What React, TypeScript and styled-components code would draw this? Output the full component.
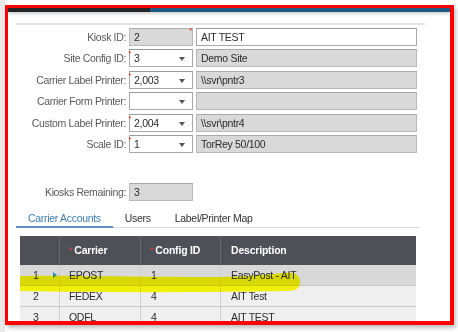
import React from "react";
import styled, { createGlobalStyle } from "styled-components";

const GlobalStyle = createGlobalStyle`
  html, body {
    margin: 0;
    padding: 0;
    width: 458px;
    height: 332px;
    overflow: hidden;
    background: #fff;
    font-family: "Liberation Sans", Arial, sans-serif;
  }
`;

const Page = styled.div`
  width: 458px;
  height: 332px;
  box-sizing: border-box;
  padding: 5px 0 0 5px;
  background: linear-gradient(to right, #e9e9e9 0 5px, #fff 5px);
`;

const Frame = styled.div`
  position: relative;
  width: 449px;
  height: 320px;
  box-sizing: border-box;
  border-style: solid;
  border-color: #ff0000;
  border-width: 3px 4px 4px 3px;
  box-shadow: 2px 3px 4px rgba(0, 0, 0, 0.25);
  overflow: hidden;
  background: #fff;
`;

const TopBar = styled.div`
  height: 4px;
  background: linear-gradient(to right, #232526 0 142px, #1d5b84 142px);
  box-shadow: 0 2px 3px rgba(0, 0, 0, 0.18);
`;

const Panel = styled.div`
  margin: 11px 0 0 8px;
  width: 409px;
  border-top: 2px solid #e4e4e4;
  padding-top: 3px;
`;

const FormGrid = styled.div<{ $top?: number }>`
  display: grid;
  grid-template-columns: 110px 64px 221px;
  grid-auto-rows: 18px;
  column-gap: 3px;
  row-gap: 3.4px;
  margin-top: ${(p) => p.$top ?? 0}px;
`;

const Label = styled.label`
  position: relative;
  justify-self: end;
  align-self: center;
  font-size: 10.5px;
  letter-spacing: -0.35px;
  color: #595959;
  white-space: nowrap;
`;

const Req = styled.span`
  position: absolute;
  z-index: 2;
  right: -5px;
  top: -3px;
  color: #e0281e;
  font-size: 8px;
`;

const Field = styled.div<{ $grey?: boolean }>`
  position: relative;
  box-sizing: border-box;
  height: 18px;
  display: flex;
  align-items: center;
  padding: 0 4px;
  font-size: 10.5px;
  letter-spacing: -0.3px;
  color: #2b2b2b;
  background: ${(p) => (p.$grey ? "#d9d9d9" : "#fff")};
  border: 1px solid ${(p) => (p.$grey ? "#b9b9b9" : "#a8a8a8")};
  border-top-color: ${(p) => (p.$grey ? "#a9a9a9" : "#9a9a9a")};
`;

const FieldReq = styled.span`
  position: absolute;
  right: 0;
  top: -3px;
  color: #e0281e;
  font-size: 8px;
`;

const Caret = styled.span`
  position: absolute;
  right: 7px;
  top: 7px;
  width: 0;
  height: 0;
  border-left: 3.5px solid transparent;
  border-right: 3.5px solid transparent;
  border-top: 4px solid #555;
`;

const TabBar = styled.div`
  display: flex;
  margin-top: 7px;
  width: 404px;
  border-bottom: 1px solid #dcdcdc;
`;

const Tab = styled.div<{ $active?: boolean }>`
  padding: 3px 12px 1px;
  line-height: 14px;
  font-size: 10.5px;
  letter-spacing: -0.3px;
  color: ${(p) => (p.$active ? "#3f7db3" : "#333")};
  border-bottom: 2px solid ${(p) => (p.$active ? "#5b93c4" : "transparent")};
  margin-bottom: -1px;
`;

const Table = styled.div`
  margin: 8px 0 0 4px;
  width: 396px;
`;

const Row = styled.div<{ $head?: boolean; $selected?: boolean }>`
  display: grid;
  grid-template-columns: 39px 81px 80px 196px;
  height: ${(p) => (p.$head ? 29 : 21)}px;
  background: ${(p) => (p.$head ? "#4e5057" : p.$selected ? "#d8d8d8" : "#efefef")};
  border-bottom: 1px solid ${(p) => (p.$head ? "#4e5057" : "#c9c9c9")};
  box-sizing: border-box;
`;

const Cell = styled.div<{ $head?: boolean; $pad?: number }>`
  display: flex;
  align-items: center;
  padding-left: ${(p) => p.$pad ?? 9}px;
  font-size: 10.5px;
  letter-spacing: ${(p) => (p.$head ? "-0.2px" : "-0.3px")};
  font-weight: ${(p) => (p.$head ? 700 : 400)};
  color: ${(p) => (p.$head ? "#fff" : "#2b2b2b")};
  border-left: 1px solid ${(p) => (p.$head ? "#666870" : "#cfcfcf")};
  &:first-child {
    border-left: none;
  }
`;

const HeadReq = styled.span`
  color: #e8463c;
  font-weight: 400;
  margin-right: 2px;
  font-size: 9px;
`;

const Pointer = styled.span`
  width: 0;
  height: 0;
  margin-left: 14px;
  border-top: 3px solid transparent;
  border-bottom: 3px solid transparent;
  border-left: 4px solid #3a8cc0;
`;

const Highlight = styled.svg`
  position: absolute;
  left: 12px;
  top: 260px;
  mix-blend-mode: multiply;
  pointer-events: none;
`;

const formRows = [
  { label: "Kiosk ID:", req: false, code: "2", codeGrey: true, codeReq: true, select: false, text: "AIT TEST", textGrey: false },
  { label: "Site Config ID:", req: true, code: "3", select: true, text: "Demo Site", textGrey: true },
  { label: "Carrier Label Printer:", req: true, code: "2,003", select: true, text: "\\\\svr\\pntr3", textGrey: true },
  { label: "Carrier Form Printer:", req: false, code: "", select: true, text: "", textGrey: true },
  { label: "Custom Label Printer:", req: true, code: "2,004", select: true, text: "\\\\svr\\pntr4", textGrey: true },
  { label: "Scale ID:", req: true, code: "1", select: true, text: "TorRey 50/100", textGrey: true },
];

const accounts = [
  { n: "1", carrier: "EPOST", config: "1", desc: "EasyPost - AIT", selected: true },
  { n: "2", carrier: "FEDEX", config: "4", desc: "AIT Test" },
  { n: "3", carrier: "ODFL", config: "4", desc: "AIT TEST" },
];

export default function App() {
  return (
    <Page>
      <GlobalStyle />
      <Frame>
        <TopBar />
        <Panel>
          <FormGrid>
            {formRows.map((r) => (
              <React.Fragment key={r.label}>
                <Label>
                  {r.label}
                  {r.req && <Req>*</Req>}
                </Label>
                <Field $grey={r.codeGrey}>
                  {r.code}
                  {r.codeReq && <FieldReq>*</FieldReq>}
                  {r.select && <Caret />}
                </Field>
                <Field $grey={r.textGrey}>{r.text}</Field>
              </React.Fragment>
            ))}
          </FormGrid>
          <FormGrid $top={30}>
            <Label>Kiosks Remaining:</Label>
            <Field $grey>3</Field>
          </FormGrid>
          <TabBar>
            <Tab $active>Carrier Accounts</Tab>
            <Tab>Users</Tab>
            <Tab>Label/Printer Map</Tab>
          </TabBar>
          <Table>
            <Row $head>
              <Cell $head />
              <Cell $head>
                <HeadReq>*</HeadReq>Carrier
              </Cell>
              <Cell $head>
                <HeadReq>*</HeadReq>Config ID
              </Cell>
              <Cell $head $pad={10}>Description</Cell>
            </Row>
            {accounts.map((a) => (
              <Row key={a.n} $selected={a.selected}>
                <Cell $pad={13}>
                  {a.n}
                  {a.selected && <Pointer />}
                </Cell>
                <Cell>{a.carrier}</Cell>
                <Cell $pad={10}>{a.config}</Cell>
                <Cell $pad={10}>{a.desc}</Cell>
              </Row>
            ))}
          </Table>
        </Panel>
        <Highlight width="284" height="32" viewBox="0 0 284 32">
          <path
            d="M0 8 C40 7 120 9 200 9 C240 9 262 4 272 5 C278 6 281 10 280 16 C279 21 275 23 266 23 C200 24 100 25 0 23 Z"
            fill="#ffff08"
          />
        </Highlight>
      </Frame>
    </Page>
  );
}
